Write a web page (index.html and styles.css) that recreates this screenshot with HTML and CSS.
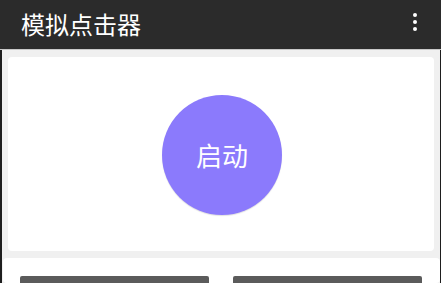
FILE: index.html
```html
<!DOCTYPE html>
<html lang="zh">
<head>
<meta charset="utf-8">
<link rel="stylesheet" href="styles.css">
</head>
<body>
<div class="app">
  <header class="toolbar">
    <h1 class="title">模拟点击器</h1>
    <div class="menu" aria-label="更多">
      <span class="dot"></span><span class="dot"></span><span class="dot"></span>
    </div>
  </header>
  <main class="content">
    <section class="card start-card">
      <button class="start-btn">启动</button>
    </section>
    <section class="card action-card">
      <div class="action-btn"></div>
      <div class="action-btn"></div>
    </section>
  </main>
</div>
</body>
</html>
```
FILE: styles.css
```css
html, body {
  margin: 0;
  padding: 0;
  width: 441px;
  height: 283px;
  overflow: hidden;
  background: #1e1e1e;
  font-family: "Noto Sans CJK SC", "Noto Sans", sans-serif;
}
.app {
  display: flex;
  flex-direction: column;
  height: 283px;
  overflow: hidden;
}
.toolbar {
  height: 49px;
  background: #2b2b2b;
  border-bottom: 1px solid #c9c9c9;
  display: flex;
  align-items: center;
  justify-content: space-between;
  padding: 0 24px 0 21px;
  flex-shrink: 0;
}
.title {
  margin: 0;
  color: #ffffff;
  font-size: 24px;
  font-weight: 400;
  line-height: 1;
  margin-top: -1px;
}
.menu {
  display: flex;
  flex-direction: column;
  gap: 3px;
  margin-top: -5px;
}
.dot {
  width: 4px;
  height: 4px;
  border-radius: 50%;
  background: #ffffff;
}
.content {
  flex: 1;
  min-height: 0;
  background: #f0f0f0;
  margin: 0 1px 0 2px;
  padding-top: 7px;
  display: flex;
  flex-direction: column;
  gap: 7px;
}
.card {
  background: #ffffff;
  border-radius: 4px;
}
.start-card {
  margin: 0 6px;
  height: 194px;
  flex-shrink: 0;
  display: flex;
  align-items: center;
  justify-content: center;
}
.start-btn {
  width: 120px;
  height: 120px;
  border-radius: 50%;
  border: none;
  background: #8b7afc;
  box-shadow: 0 1px 1px rgba(0,0,0,0.12);
  color: #ffffff;
  font-family: "Noto Sans CJK SC", sans-serif;
  font-size: 26px;
  padding: 0;
  margin-top: 1px;
  margin-left: 2px;
}
.action-card {
  flex: 1;
  min-height: 0;
  overflow: hidden;
  margin: 0 0 0 1px;
  padding: 18px 18px 0 17px;
  display: flex;
  gap: 24px;
}
.action-btn {
  flex: 1;
  height: 30px;
  flex-shrink: 0;
  background: #5b5b5b;
  border-radius: 2px;
}
```
